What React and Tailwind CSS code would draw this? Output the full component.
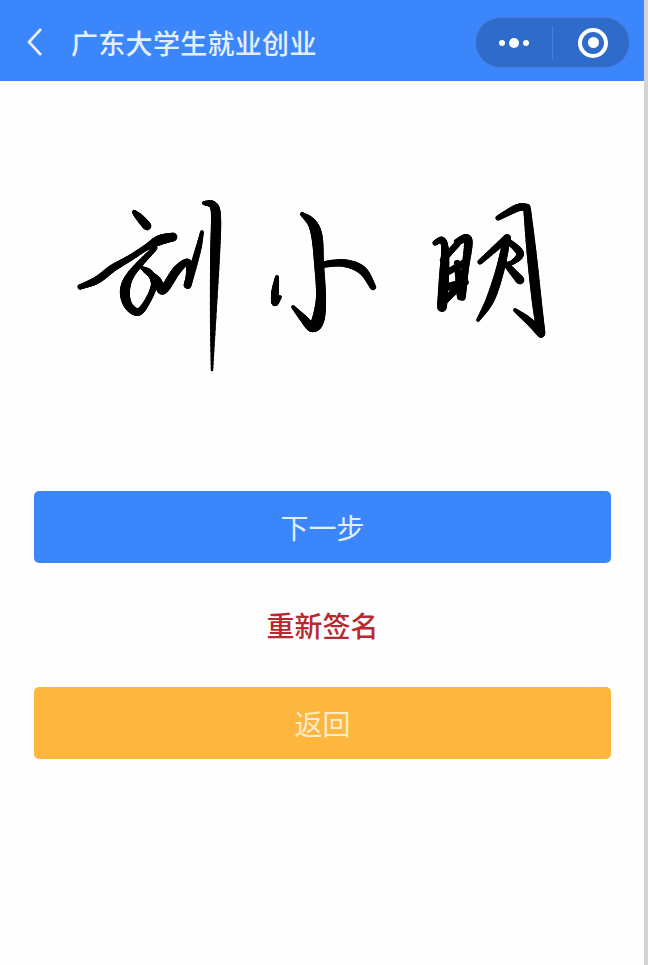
// signature strokes: each point is [x, y, brush width]
const strokes = [
  // 刘
  [[134, 212, 3], [140, 218, 6], [147, 226, 7]],
  [[80, 287, 4], [97, 280, 6], [113, 268, 6], [130, 258, 5], [147, 247, 5], [160, 240, 8], [173, 237, 7]],
  [[155, 248, 4], [132, 273, 6], [125, 290, 8], [128, 305, 7], [138, 312, 6], [147, 302, 5], [154, 285, 5], [150, 273, 5], [142, 268, 3]],
  [[145, 270, 4], [157, 280, 6], [163, 290, 7], [177, 270, 7], [188, 262, 5], [189, 275, 5], [188, 284, 6], [198, 250, 5], [202, 232, 3]],
  [[204, 203, 3], [213, 205, 6], [216, 217, 8], [215, 257, 8], [213, 323, 5], [212, 370, 2]],
  // 小
  [[302, 214, 3], [312, 223, 7], [317, 237, 9], [319, 263, 8], [321, 297, 8], [318, 320, 10], [312, 327, 8], [303, 318, 6], [293, 307, 3]],
  [[320, 265, 5], [343, 263, 6], [362, 270, 7], [373, 287, 5]],
  [[277, 277, 3], [275, 293, 6], [275, 303, 5], [280, 297, 3]],
  // 明
  [[498, 218, 4], [517, 208, 6], [527, 207, 5]],
  [[527, 208, 6], [532, 257, 8], [537, 303, 8], [541, 333, 7]],
  [[515, 310, 3], [530, 322, 6], [541, 334, 6]],
  [[435, 243, 4], [442, 240, 5], [445, 250, 6], [444, 277, 8], [442, 307, 8]],
  [[457, 242, 5], [468, 240, 7], [465, 270, 6], [462, 297, 6]],
  [[443, 260, 5], [458, 243, 5]],
  [[448, 272, 5], [465, 262, 5]],
  [[448, 287, 6], [465, 282, 6]],
  [[442, 303, 6], [463, 283, 5]],
  [[457, 263, 5], [460, 297, 5]],
  [[507, 238, 6], [500, 270, 7], [490, 300, 7], [478, 320, 3]],
  [[480, 262, 4], [507, 238, 6]],
  [[507, 240, 4], [520, 253, 6], [513, 262, 4], [503, 265, 3]],
  [[505, 263, 4], [520, 280, 7]],
]

// smooth the points with catmull-rom so the brush width can change along a stroke
const smooth = (pts) => {
  const out = []
  for (let i = 0; i < pts.length - 1; i++) {
    const p0 = pts[Math.max(i - 1, 0)]
    const p1 = pts[i]
    const p2 = pts[i + 1]
    const p3 = pts[Math.min(i + 2, pts.length - 1)]
    for (let k = 0; k < 10; k++) {
      const t = k / 10
      out.push(
        [0, 1, 2].map((n) =>
          0.5 * (2 * p1[n] + (p2[n] - p0[n]) * t + (2 * p0[n] - 5 * p1[n] + 4 * p2[n] - p3[n]) * t * t + (3 * p1[n] - p0[n] - 3 * p2[n] + p3[n]) * t * t * t)
        )
      )
    }
  }
  out.push(pts[pts.length - 1])
  return out
}

const Signature = () => (
  <svg viewBox="0 81 644 410" className="block w-full h-[410px]">
    {strokes.map((pts, i) =>
      smooth(pts).map((p, j, all) =>
        j === 0 ? null : (
          <line key={`${i}-${j}`} x1={all[j - 1][0]} y1={all[j - 1][1]} x2={p[0]} y2={p[1]} stroke="#000" strokeWidth={p[2] * 1.25} strokeLinecap="round" />
        )
      )
    )}
  </svg>
)

const App = () => {
  return (
    <div className="flex w-[648px] h-[965px] overflow-hidden bg-[#d4d4d6] font-['Noto_Sans_CJK_SC',sans-serif]">
      <div className="w-[644px] bg-[#fefefe]">
        <header className="flex items-center h-[81px] bg-[#3b86fb] text-[#e4eefc]">
          <svg viewBox="0 0 20 32" className="w-[20px] h-[32px] ml-[25px] mt-[2px]" fill="none" stroke="#e8f0fd" strokeWidth="2.6">
            <path d="M16 3 L4 16 L16 29" />
          </svg>
          <h1 className="ml-[26px] mt-[3px] text-[27px] font-medium tracking-[0.3px] leading-none">广东大学生就业创业</h1>
          <div className="ml-auto mr-[14px] mt-[4px] flex items-center w-[155px] h-[51px] rounded-full bg-[#2e6bcb] border border-[#4a80d8]">
            <div className="flex flex-none w-[76px] items-center justify-center gap-[4px]">
              <span className="w-[6px] h-[6px] rounded-full bg-white" />
              <span className="w-[10px] h-[10px] rounded-full bg-white" />
              <span className="w-[6px] h-[6px] rounded-full bg-white" />
            </div>
            <div className="w-px h-[34px] bg-[#4a7fd4]" />
            <div className="flex flex-1 items-center justify-center pl-[4px]">
              <span className="flex items-center justify-center w-[30px] h-[30px] rounded-full border-[4px] border-white">
                <span className="w-[11px] h-[11px] rounded-full bg-white" />
              </span>
            </div>
          </div>
        </header>

        <Signature />

        <div className="px-[34px] pr-[33px]">
          <button className="block w-full h-[72px] rounded-[5px] bg-[#3b86fb] text-[28px] text-[#e4eefc]">下一步</button>
          <p className="h-[124px] flex items-center justify-center text-[28px] font-medium text-[#b8292f]">重新签名</p>
          <button className="block w-full h-[72px] rounded-[5px] bg-[#fdb73e] text-[28px] text-[#fbeccd]">返回</button>
        </div>
      </div>
    </div>
  )
}

export default App
